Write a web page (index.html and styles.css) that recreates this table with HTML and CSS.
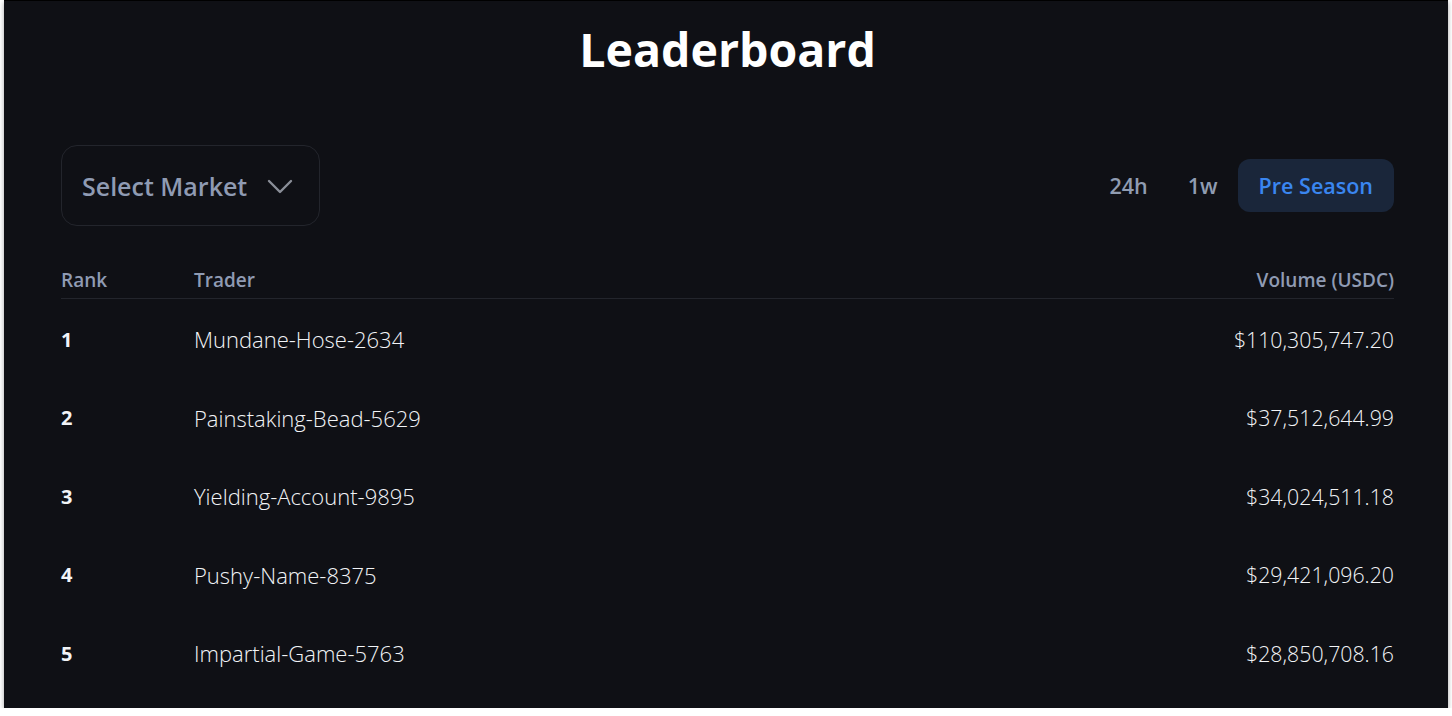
FILE: index.html
```html
<!DOCTYPE html>
<html>
<head>
<meta charset="utf-8">
<link rel="stylesheet" href="styles.css">
</head>
<body>
<div class="panel">
  <h1 class="title">Leaderboard</h1>
  <div class="controls">
    <button class="select">
      <span>Select Market</span>
      <svg class="chev" width="26" height="16" viewBox="0 0 26 16" fill="none" stroke="currentColor" stroke-width="2.4" stroke-linecap="round" stroke-linejoin="round"><path d="M2 2l11 11 11-11"/></svg>
    </button>
    <div class="tabs">
      <button class="tab">24h</button>
      <button class="tab">1w</button>
      <button class="tab active">Pre Season</button>
    </div>
  </div>
  <div class="table">
    <div class="row head">
      <div class="c-rank">Rank</div>
      <div class="c-trader">Trader</div>
      <div class="c-vol">Volume (USDC)</div>
    </div>
    <div class="row">
      <div class="c-rank">1</div>
      <div class="c-trader">Mundane-Hose-2634</div>
      <div class="c-vol">$110,305,747.20</div>
    </div>
    <div class="row">
      <div class="c-rank">2</div>
      <div class="c-trader">Painstaking-Bead-5629</div>
      <div class="c-vol">$37,512,644.99</div>
    </div>
    <div class="row">
      <div class="c-rank">3</div>
      <div class="c-trader">Yielding-Account-9895</div>
      <div class="c-vol">$34,024,511.18</div>
    </div>
    <div class="row">
      <div class="c-rank">4</div>
      <div class="c-trader">Pushy-Name-8375</div>
      <div class="c-vol">$29,421,096.20</div>
    </div>
    <div class="row">
      <div class="c-rank">5</div>
      <div class="c-trader">Impartial-Game-5763</div>
      <div class="c-vol">$28,850,708.16</div>
    </div>
  </div>
</div>
</body>
</html>
```
FILE: styles.css
```css
html, body {
  margin: 0;
  padding: 0;
  background: #ffffff;
}
body {
  font-family: "Open Sans", "Noto Sans", sans-serif;
}
.panel {
  margin-left: 4px;
  width: 1444px;
  height: 708px;
  box-sizing: border-box;
  border-top: 1px solid #000;
  background: #0f1015;
  box-shadow: 0 2px 5px rgba(0,0,0,0.35);
  padding: 0 54px 0 57px;
}
.title {
  margin: 0;
  padding-top: 18px;
  height: 60px;
  line-height: 60px;
  text-align: center;
  color: #ffffff;
  font-size: 46.5px;
  font-weight: 700;
}
.controls {
  margin-top: 66px;
  display: flex;
  align-items: center;
  justify-content: space-between;
}
.select {
  display: flex;
  align-items: center;
  gap: 20px;
  height: 81px;
  width: 259px;
  box-sizing: border-box;
  padding: 0 20px;
  background: transparent;
  border: 1px solid #23252c;
  border-radius: 16px;
  font-family: inherit;
  font-size: 25px;
  font-weight: 600;
  color: #8f9bb3;
}
.chev {
  color: #8a8e98;
  margin-top: 2px;
}
.tabs {
  display: flex;
  align-items: center;
  gap: 0;
}
.tab {
  background: transparent;
  border: none;
  font-family: inherit;
  font-size: 21.5px;
  font-weight: 600;
  color: #909cb1;
  padding: 0 20px;
  height: 53px;
  border-radius: 12px;
}
.tab.short {
  padding: 0 19px;
}
.tab.active {
  background: #1a263a;
  color: #3a86f0;
  padding: 0 21px;
}
.table {
  margin-top: 36px;
}
.row {
  display: flex;
  align-items: center;
  height: 78.5px;
  color: #f2f4f7;
  font-size: 21.3px;
  font-weight: 300;
}
.row.head {
  height: 36px;
  border-bottom: 1px solid #23252c;
  color: #8f9bb3;
  font-size: 19px;
  font-weight: 600;
  margin-bottom: 1px;
}
.c-rank {
  width: 133px;
}
.row:not(.head) .c-rank {
  font-weight: 700;
  font-size: 20px;
}
.c-trader {
  flex: 1;
}
.row:not(.head) .c-trader {
  font-size: 22px;
}
.c-vol {
  text-align: right;
}
```
